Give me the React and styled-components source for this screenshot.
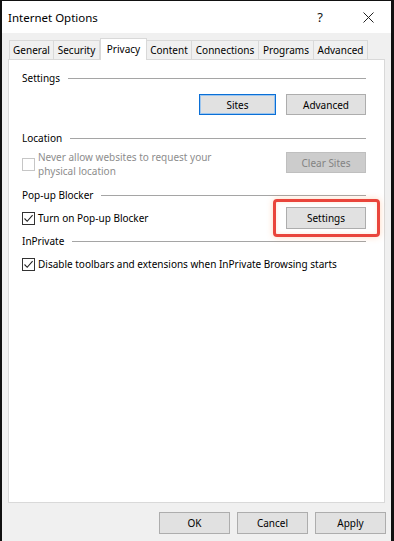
import React from "react"
import styled, { createGlobalStyle } from "styled-components"

const Global = createGlobalStyle`
  html, body {
    margin: 0;
    padding: 0;
    background: #111;
  }
  body {
    font-family: "Noto Sans", "Liberation Sans", sans-serif;
    font-size: 10px;
    color: #000;
  }
`

const Window = styled.div`
  width: 394px;
  height: 541px;
  box-sizing: border-box;
  border-style: solid;
  border-color: #111;
  border-width: 1px 3px 0 2px;
  background: #f0f0f0;
  display: flex;
  flex-direction: column;
`

const TitleBar = styled.div`
  height: 32px;
  flex: none;
  background: #fff;
  display: flex;
  align-items: center;
  padding-left: 6px;
`

const Title = styled.div`
  flex: 1;
  font-size: 11.5px;
  color: #000;
`

const CaptionButton = styled.div`
  width: 46px;
  height: 32px;
  display: flex;
  align-items: center;
  justify-content: center;
  font-size: 13px;
  color: #111;
  & + & {
    margin-left: 2px;
  }
`

const Body = styled.div`
  flex: 1;
  display: flex;
  flex-direction: column;
  padding: 5px 6px 0 6px;
  min-height: 0;
`

const TabStrip = styled.div`
  display: flex;
  align-items: flex-end;
  padding-left: 1px;
  height: 22px;
  margin-bottom: -1px;
  position: relative;
  z-index: 1;
`

const Tab = styled.div`
  box-sizing: border-box;
  width: ${p => p.w}px;
  height: ${p => (p.active ? 22 : 20)}px;
  display: flex;
  align-items: center;
  justify-content: center;
  background: ${p => (p.active ? "#fff" : "#f0f0f0")};
  border: 1px solid #d9d9d9;
  border-bottom: ${p => (p.active ? "none" : "1px solid #d9d9d9")};
  border-left-width: ${p => (p.first || p.active ? 1 : 0)}px;
  padding-bottom: ${p => (p.active ? 2 : 0)}px;
  white-space: nowrap;
`

const Panel = styled.div`
  flex: 1;
  background: #fff;
  border: 1px solid #d9d9d9;
  padding: 10px 18px 0 13px;
  display: flex;
  flex-direction: column;
`

const Legend = styled.div`
  display: flex;
  align-items: center;
  height: 16px;
  margin-top: ${p => p.mt || 0}px;
  &::after {
    content: "";
    flex: 1;
    height: 1px;
    background: #a5a5a5;
    margin-left: 8px;
  }
`

const ButtonRow = styled.div`
  display: flex;
  justify-content: flex-end;
  gap: 10px;
  margin-top: 8px;
`

const Button = styled.div`
  box-sizing: border-box;
  width: ${p => p.w || 79}px;
  height: ${p => p.h || 21}px;
  display: flex;
  align-items: center;
  justify-content: center;
  background: ${p => (p.disabled ? "#cccccc" : "#e1e1e1")};
  color: ${p => (p.disabled ? "#838383" : "#000")};
  border: 1px solid ${p => (p.focused ? "#0a6fd6" : p.disabled ? "#bfbfbf" : "#adadad")};
  box-shadow: ${p => (p.focused ? "inset 0 0 0 1px #9cc5ee" : "none")};
  flex: none;
`

const OptionRow = styled.div`
  display: flex;
  align-items: ${p => (p.top ? "flex-start" : "center")};
  margin-top: ${p => p.mt || 0}px;
`

const Check = styled.div`
  box-sizing: border-box;
  width: 13px;
  height: 13px;
  flex: none;
  border: 1px solid ${p => (p.disabled ? "#c6c6c6" : "#333")};
  background: #fff;
  margin-top: ${p => p.mt || 0}px;
  display: flex;
  align-items: center;
  justify-content: center;
`

const OptionText = styled.div`
  flex: 1;
  padding-left: 3px;
  line-height: 14px;
  color: ${p => (p.disabled ? "#8d8d8d" : "#000")};
`

const Highlight = styled.div`
  position: relative;
  flex: none;
  &::after {
    content: "";
    position: absolute;
    inset: -8px -14px -8px -13px;
    border: 3px solid #e9453b;
    border-radius: 4px;
    box-shadow: 0 0 6px rgba(255, 140, 70, 0.35), inset 0 0 4px rgba(255, 160, 90, 0.25);
    pointer-events: none;
  }
`

const Footer = styled.div`
  height: 38px;
  flex: none;
  display: flex;
  justify-content: flex-end;
  align-items: flex-start;
  gap: 7px;
  padding-top: 9px;
  box-sizing: border-box;
  margin-right: -1px;
`

const Tick = () => (
  <svg width="11" height="11" viewBox="0 0 11 11">
    <path d="M1.5 5.5 L4.2 8.3 L9.6 2.2" fill="none" stroke="#222" strokeWidth="1.1" />
  </svg>
)

const CloseIcon = () => (
  <svg width="11" height="11" viewBox="0 0 11 11">
    <path d="M0.5 0.5 L10.5 10.5 M10.5 0.5 L0.5 10.5" stroke="#222" strokeWidth="1" />
  </svg>
)

const tabs = [
  ["General", 45],
  ["Security", 46],
  ["Privacy", 47],
  ["Content", 45],
  ["Connections", 67],
  ["Programs", 55],
  ["Advanced", 54],
]

export default function App() {
  return (
    <>
      <Global />
      <Window>
        <TitleBar>
          <Title>Internet Options</Title>
          <CaptionButton>?</CaptionButton>
          <CaptionButton>
            <CloseIcon />
          </CaptionButton>
        </TitleBar>
        <Body>
          <TabStrip>
            {tabs.map(([name, w], i) => (
              <Tab key={name} w={w} first={i === 0} active={name === "Privacy"}>
                {name}
              </Tab>
            ))}
          </TabStrip>
          <Panel>
            <Legend>Settings</Legend>
            <ButtonRow>
              <Button w={77} focused>Sites</Button>
              <Button w={80}>Advanced</Button>
            </ButtonRow>

            <Legend mt={15}>Location</Legend>
            <OptionRow top mt={4}>
              <Check disabled mt={8} />
              <OptionText disabled>
                Never allow websites to request your
                <br />
                physical location
              </OptionText>
              <Button w={80} disabled style={{ marginTop: 2 }}>Clear Sites</Button>
            </OptionRow>

            <Legend mt={9}>Pop-up Blocker</Legend>
            <OptionRow mt={4}>
              <Check>
                <Tick />
              </Check>
              <OptionText>Turn on Pop-up Blocker</OptionText>
              <Highlight>
                <Button w={80} h={22}>Settings</Button>
              </Highlight>
            </OptionRow>

            <Legend mt={4}>InPrivate</Legend>
            <OptionRow mt={8}>
              <Check>
                <Tick />
              </Check>
              <OptionText>Disable toolbars and extensions when InPrivate Browsing starts</OptionText>
            </OptionRow>
          </Panel>
          <Footer>
            <Button w={71} h={22}>OK</Button>
            <Button w={71} h={22}>Cancel</Button>
            <Button w={71} h={22}>Apply</Button>
          </Footer>
        </Body>
      </Window>
    </>
  )
}
